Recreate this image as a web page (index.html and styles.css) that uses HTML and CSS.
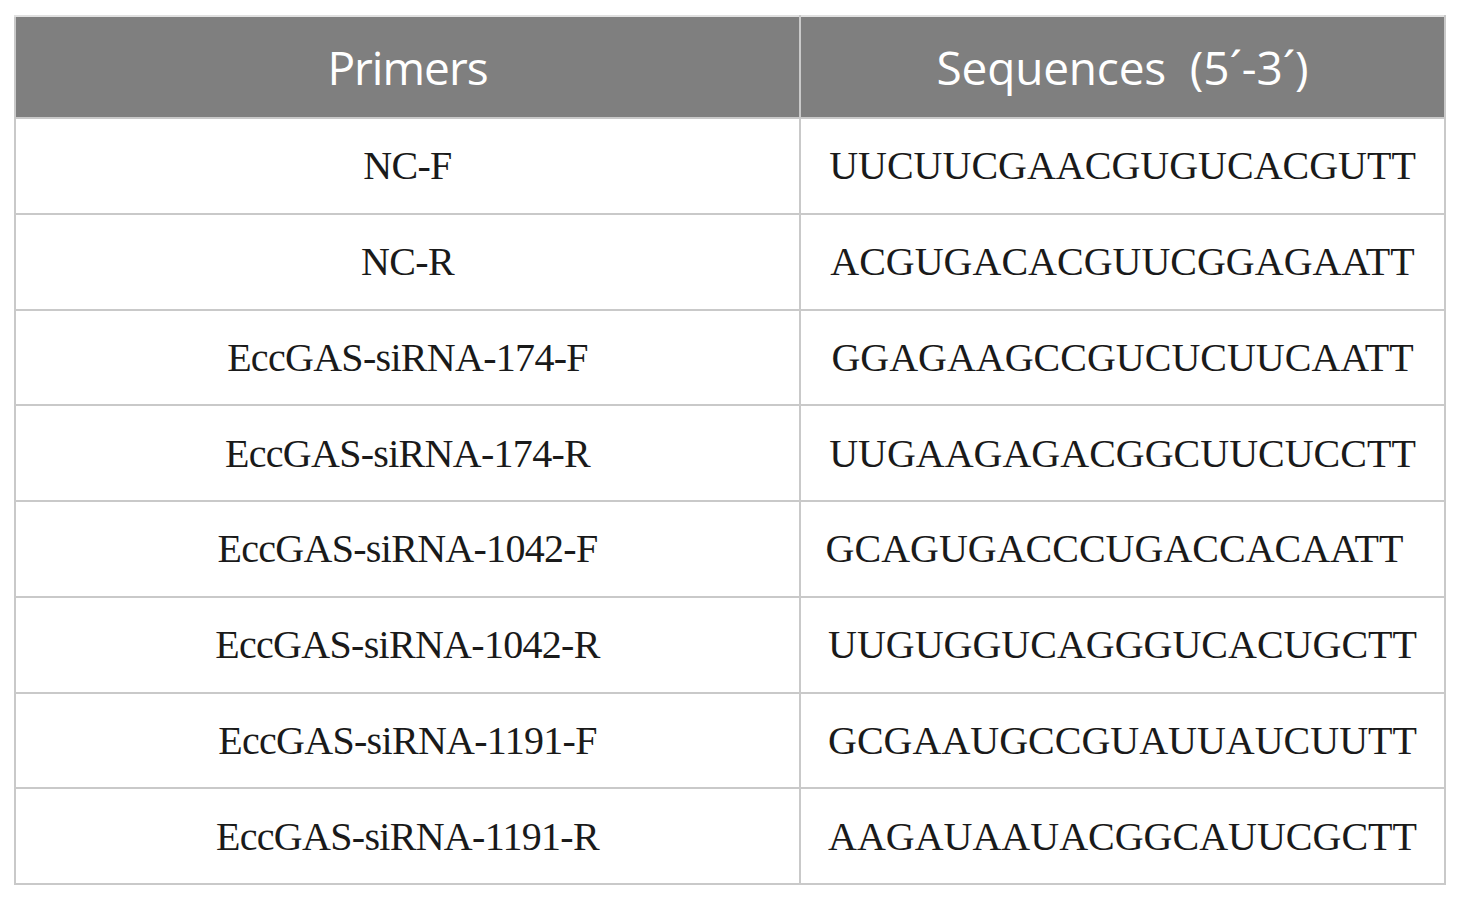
FILE: index.html
```html
<!DOCTYPE html>
<html>
<head>
<meta charset="utf-8">
<link rel="stylesheet" href="styles.css">
</head>
<body>
<table class="primers">
  <colgroup><col class="c1"><col class="c2"></colgroup>
  <thead>
    <tr><th>Primers</th><th class="seqhead">Sequences (5´-3´)</th></tr>
  </thead>
  <tbody>
    <tr><td>NC-F</td><td>UUCUUCGAACGUGUCACGUTT</td></tr>
    <tr><td>NC-R</td><td>ACGUGACACGUUCGGAGAATT</td></tr>
    <tr><td>EccGAS-siRNA-174-F</td><td>GGAGAAGCCGUCUCUUCAATT</td></tr>
    <tr><td>EccGAS-siRNA-174-R</td><td>UUGAAGAGACGGCUUCUCCTT</td></tr>
    <tr><td>EccGAS-siRNA-1042-F</td><td class="shift">GCAGUGACCCUGACCACAATT</td></tr>
    <tr><td>EccGAS-siRNA-1042-R</td><td>UUGUGGUCAGGGUCACUGCTT</td></tr>
    <tr><td>EccGAS-siRNA-1191-F</td><td>GCGAAUGCCGUAUUAUCUUTT</td></tr>
    <tr><td>EccGAS-siRNA-1191-R</td><td>AAGAUAAUACGGCAUUCGCTT</td></tr>
  </tbody>
</table>
</body>
</html>
```
FILE: styles.css
```css
html, body {
  margin: 0;
  padding: 0;
  background: #ffffff;
}
body {
  padding: 15px 0 0 14px;
}
.primers {
  border-collapse: collapse;
  width: 1430px;
  table-layout: fixed;
}
.c1 { width: 785px; }
.c2 { width: 645px; }
.primers th,
.primers td {
  border: 2px solid #c9c9c9;
  text-align: center;
  vertical-align: middle;
  padding: 0;
}
.primers th {
  background: #7f7f7f;
  color: #ffffff;
  font-family: "Open Sans", "Noto Sans", sans-serif;
  font-weight: 400;
  font-size: 46px;
  letter-spacing: -1px;
  height: 100px;
  border-top-color: #e0e0e0;
}
.primers th.seqhead {
  letter-spacing: -0.2px;
  word-spacing: 12px;
}
.primers td {
  font-family: "Liberation Serif", "Times New Roman", serif;
  font-size: 40px;
  color: #1a1a1a;
  height: 93.75px;
}
.primers td:first-child {
  letter-spacing: -0.7px;
}
.primers td.shift {
  padding-right: 16px;
}
```
